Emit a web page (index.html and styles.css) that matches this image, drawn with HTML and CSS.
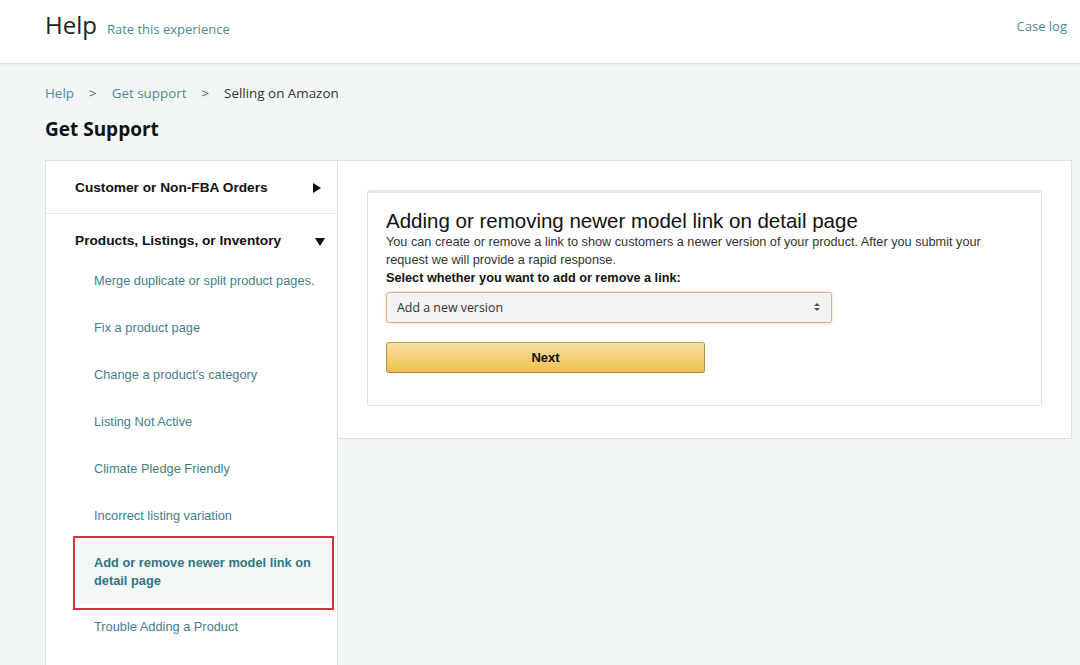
FILE: index.html
```html
<!DOCTYPE html>
<html lang="en">
<head>
    <meta charset="UTF-8">
    <title>Get Support</title>
    <link rel="stylesheet" href="styles.css">
</head>
<body>
    <header class="topbar">
        <div class="brand">
            <h1>Help</h1>
            <a href="#" class="rate">Rate this experience</a>
        </div>
        <a href="#" class="case-log">Case log</a>
    </header>

    <main class="page">
        <nav class="crumbs">
            <a href="#">Help</a>
            <span class="sep">&gt;</span>
            <a href="#">Get support</a>
            <span class="sep">&gt;</span>
            <span class="current">Selling on Amazon</span>
        </nav>
        <h2 class="page-title">Get Support</h2>

        <div class="support">
            <aside class="sidebar">
                <div class="group">
                    <div class="group-head">
                        Customer or Non-FBA Orders
                        <span class="tri tri-right"></span>
                    </div>
                </div>
                <div class="group open">
                    <div class="group-head">
                        Products, Listings, or Inventory
                        <span class="tri tri-down"></span>
                    </div>
                    <ul class="topics">
                        <li>Merge duplicate or split product pages.</li>
                        <li>Fix a product page</li>
                        <li>Change a product's category</li>
                        <li>Listing Not Active</li>
                        <li>Climate Pledge Friendly</li>
                        <li>Incorrect listing variation</li>
                        <li class="selected">Add or remove newer model link on detail page</li>
                        <li>Trouble Adding a Product</li>
                    </ul>
                </div>
            </aside>

            <section class="panel">
                <div class="card">
                    <h3>Adding or removing newer model link on detail page</h3>
                    <p class="desc">You can create or remove a link to show customers a newer version of your product. After you submit your request we will provide a rapid response.</p>
                    <label class="field-label" for="link-action">Select whether you want to add or remove a link:</label>
                    <div class="select">
                        <span id="link-action">Add a new version</span>
                        <svg width="8" height="10" viewBox="0 0 8 10"><path d="M4 1 L7 4 H1 Z M4 9 L7 6 H1 Z" fill="#555"/></svg>
                    </div>
                    <button class="next-btn">Next</button>
                </div>
            </section>
        </div>
    </main>
</body>
</html>
```

FILE: styles.css
```css
/*reset*/
* {
    padding: 0;
    margin: 0;
    box-sizing: border-box;
}
ul {
    list-style: none;
}
a {
    text-decoration: none;
}

/*default*/
html, body {
    height: 100%;
    overflow: hidden;
}
body {
    background-color: #f3f6f6;
    font: 13px/1.4 "Open Sans", sans-serif;
    color: #111;
}

/*header*/
.topbar {
    height: 64px;
    background-color: #fff;
    border-bottom: 1px solid #dde1e1;
    box-shadow: 0 1px 2px rgba(0,0,0,.04);
    display: flex;
    justify-content: space-between;
    align-items: center;
    padding: 0 13px 14px 45px;
}
.brand {
    display: flex;
    align-items: baseline;
    gap: 10px;
}
.brand h1 {
    font-size: 24px;
    font-weight: 400;
    color: #222;
}
.rate, .case-log {
    font-size: 13px;
    color: #4b8a92;
}
.case-log {
    margin-top: 4px;
}

/*breadcrumb + title*/
.page {
    padding: 0 8px 0 45px;
}
.crumbs {
    margin-top: 18px;
    display: flex;
    gap: 14px;
    line-height: 22px;
    font-size: 13.4px;
}
.crumbs a {
    color: #4b8a92;
}
.crumbs .sep {
    color: #555;
    margin: 0 1px;
}
.crumbs .current {
    color: #333;
}
.page-title {
    font-size: 19px;
    font-weight: 700;
    color: #111;
    margin: 12px 0 17px;
}

/*support area*/
.support {
    display: grid;
    grid-template-columns: 293px 734px;
    align-items: start;
}

/*sidebar*/
.sidebar {
    background-color: #fff;
    border: 1px solid #dde1e1;
    border-bottom: none;
    font-family: "Liberation Sans", Arial, sans-serif;
    padding-bottom: 40px;
}
.group-head {
    position: relative;
    font-size: 13.7px;
    font-weight: 700;
    line-height: 18px;
    color: #111;
    padding: 18px 50px 16px 29px;
}
.group:first-child {
    border-bottom: 1px solid #e3e6e6;
    margin-right: 2px;
}
.open .group-head {
    padding: 18px 50px 8px 29px;
}
.tri {
    position: absolute;
    right: 14px;
    top: 22px;
    width: 0;
    height: 0;
}
.tri-right {
    border-top: 5px solid transparent;
    border-bottom: 5px solid transparent;
    border-left: 8px solid #111;
    top: 22px;
}
.tri-down {
    border-left: 5px solid transparent;
    border-right: 5px solid transparent;
    border-top: 8px solid #111;
    right: 12px;
    top: 24px;
}
.topics {
    margin: 0 3px 0 27px;
}
.topics li {
    font-size: 12.8px;
    line-height: 18px;
    color: #3f7f88;
    padding: 14.5px 16px 14.5px 21px;
}
.topics li.selected {
    position: relative;
    padding: 14px 16px 14px 21px;
    font-weight: 700;
    color: #2f7781;
    background-color: #f4f7f7;
}
.topics li.selected::after {
    content: "";
    position: absolute;
    left: 0;
    right: 0;
    top: -4px;
    bottom: -6px;
    border: 2px solid #d6343c;
}

/*main panel*/
.panel {
    background-color: #fff;
    border: 1px solid #dde1e1;
    border-left: none;
    height: 279px;
    padding: 29px 29px 0 29px;
    font-family: "Liberation Sans", Arial, sans-serif;
}
.card {
    border: 1px solid #dde1e1;
    border-top: 3px solid #e6e8e8;
    border-radius: 2px;
    padding: 16px 18px 32px;
}
.card h3 {
    font-size: 20.5px;
    font-weight: 400;
    line-height: 24px;
    color: #111;
}
.desc {
    font-size: 12.7px;
    line-height: 18px;
    color: #333;
    padding-right: 40px;
}
.field-label {
    display: block;
    font-size: 12.7px;
    font-weight: 700;
    line-height: 18px;
    color: #111;
}
.select {
    margin-top: 5px;
    width: 446px;
    height: 31px;
    display: flex;
    justify-content: space-between;
    align-items: center;
    padding: 0 10px 0 10px;
    background-color: #f2f3f3;
    border: 1px solid #e4a990;
    border-radius: 3px;
    box-shadow: 0 0 3px rgba(228,121,17,.35), inset 0 1px 0 #fff;
    font: 12.4px "Open Sans", sans-serif;
    color: #333;
}
.next-btn {
    display: block;
    margin-top: 19px;
    width: 319px;
    height: 31px;
    background: linear-gradient(#f7dfa5, #f0c14b);
    border: 1px solid;
    border-color: #c9a548 #b8933a #a88734;
    border-radius: 3px;
    font: 700 13px "Liberation Sans", Arial, sans-serif;
    color: #111;
}
```
